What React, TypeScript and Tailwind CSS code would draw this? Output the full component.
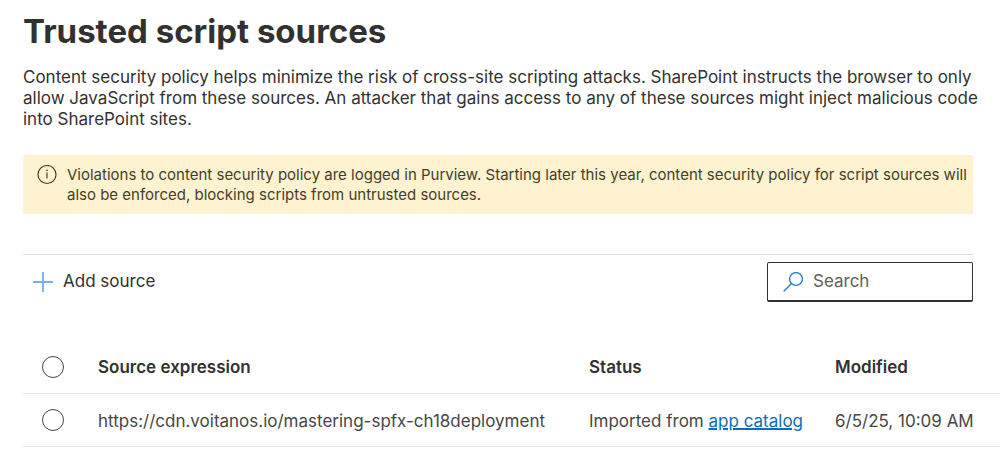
import React, { useState } from "react";

type Source = {
  expression: string;
  modified: string;
};

const sources: Source[] = [
  {
    expression: "https://cdn.voitanos.io/mastering-spfx-ch18deployment",
    modified: "6/5/25, 10:09 AM",
  },
];

function InfoIcon() {
  return (
    <svg className="size-5 shrink-0" viewBox="0 0 20 20" fill="none" stroke="currentColor" aria-hidden="true">
      <circle cx="10" cy="9.5" r="9" strokeWidth="1.2" />
      <path d="M10 7.5V13.5" strokeWidth="1.2" />
      <circle cx="10" cy="5.4" r="0.8" fill="currentColor" stroke="none" />
    </svg>
  );
}

function AddIcon() {
  return (
    <svg className="size-5 shrink-0 text-[#6fb0e8]" viewBox="0 0 20 20" fill="none" stroke="currentColor" strokeWidth="1.8" aria-hidden="true">
      <path d="M10 0V20M0 10H20" />
    </svg>
  );
}

function SearchIcon() {
  return (
    <svg className="size-5 shrink-0 text-[#2b7fd0]" viewBox="0 0 20 20" fill="none" stroke="currentColor" strokeWidth="1.4" aria-hidden="true">
      <circle cx="13" cy="7" r="6.4" />
      <path d="M8.5 11.5L0.6 19.4" />
    </svg>
  );
}

type SelectCircleProps = {
  label: string;
  checked: boolean;
  onChange: () => void;
};

function SelectCircle({ label, checked, onChange }: SelectCircleProps) {
  return (
    <input
      type="checkbox"
      aria-label={label}
      checked={checked}
      onChange={onChange}
      className="block size-[22px] appearance-none rounded-full border border-[#484644] bg-white checked:bg-[#0078d4]"
    />
  );
}

export default function App() {
  const [selected, setSelected] = useState<string[]>([]);
  const [query, setQuery] = useState("");
  const allSelected = selected.length === sources.length;
  const visible = sources.filter((s) => s.expression.includes(query));

  const toggle = (expression: string) =>
    setSelected((current) =>
      current.includes(expression)
        ? current.filter((e) => e !== expression)
        : [...current, expression],
    );

  return (
    <main className="overflow-x-hidden bg-white pl-[23px] pt-[11px] font-['Inter',sans-serif] text-[#323130]">
      <h1 className="text-[33px] font-bold leading-10">Trusted script sources</h1>
      <p className="mr-4 mt-4 text-[17px] leading-[21px]">
        Content security policy helps minimize the risk of cross-site scripting attacks. SharePoint
        instructs the browser to only allow JavaScript from these sources. An attacker that gains
        access to any of these sources might inject malicious code into SharePoint sites.
      </p>

      <div className="mr-[27px]">
        <div role="status" className="mt-[25px] flex gap-2.5 bg-[#fff2d0] pb-[9px] pl-3.5 pt-2.5 text-[#443e2b]">
          <InfoIcon />
          <p className="text-[15px] leading-5">
            Violations to content security policy are logged in Purview. Starting later this year,
            content security policy for script sources will also be enforced, blocking scripts from
            untrusted sources.
          </p>
        </div>

        <div className="mt-10 flex items-center justify-between border-t border-[#e1dfdd] pt-[7px]">
          <button type="button" className="flex items-center gap-2.5 pl-2.5 text-[17px]">
            <AddIcon />
            Add source
          </button>
          <label className="flex h-10 w-[206px] items-center gap-2.5 rounded-xs border border-b-2 border-[#323130] pl-[15px] pr-2">
            <SearchIcon />
            <input
              type="text"
              aria-label="Search"
              placeholder="Search"
              value={query}
              onChange={(e) => setQuery(e.target.value)}
              className="min-w-0 flex-1 text-[17px] outline-none placeholder:text-[#605e5c]"
            />
          </label>
        </div>
      </div>

      <table className="mt-[38px] w-full table-fixed text-left text-[17px]">
        <thead>
          <tr className="h-[53px] border-b border-[#e6e5e4]">
            <th className="w-[75px] pl-[19px] pt-0.5">
              <SelectCircle
                label="Select all sources"
                checked={allSelected}
                onChange={() => setSelected(allSelected ? [] : sources.map((s) => s.expression))}
              />
            </th>
            <th className="w-[491px] pt-0.5 font-semibold">Source expression</th>
            <th className="w-[246px] pt-0.5 font-semibold">Status</th>
            <th className="pt-0.5 font-semibold">Modified</th>
          </tr>
        </thead>
        <tbody className="text-[#484644]">
          {visible.map((source) => (
            <tr key={source.expression} className="h-[53px] border-b border-[#e6e5e4]">
              <td className="pl-[19px]">
                <SelectCircle
                  label={`Select ${source.expression}`}
                  checked={selected.includes(source.expression)}
                  onChange={() => toggle(source.expression)}
                />
              </td>
              <td className="pt-1">{source.expression}</td>
              <td className="pt-1">
                Imported from{" "}
                <a href="#app-catalog" className="text-[#0f6cbd] underline decoration-2">
                  app catalog
                </a>
              </td>
              <td className="whitespace-nowrap pt-1">{source.modified}</td>
            </tr>
          ))}
        </tbody>
      </table>
    </main>
  );
}
